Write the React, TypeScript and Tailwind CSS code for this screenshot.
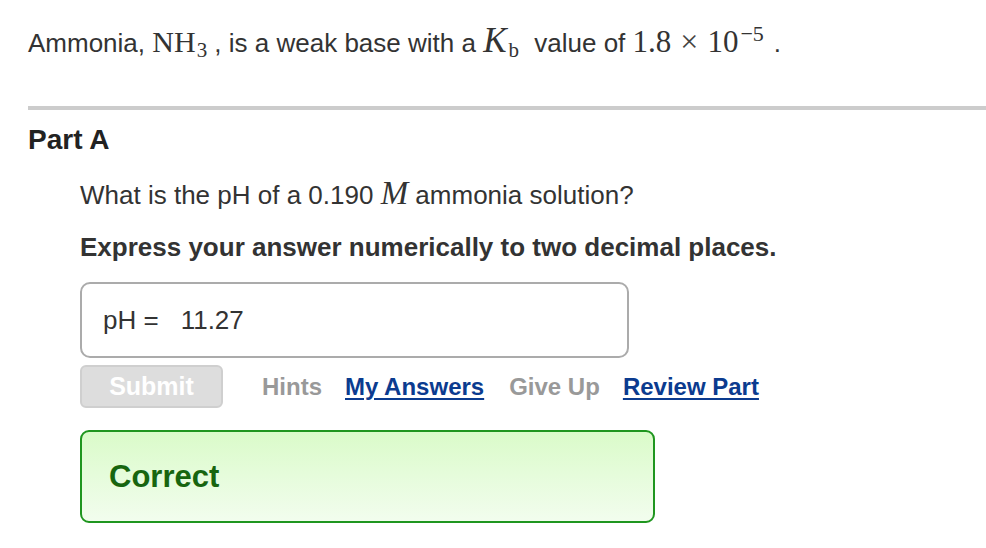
import React from "react";

const sans = { fontFamily: '"Liberation Sans", Arial, Helvetica, sans-serif' };

export default function App() {
  return (
    <div
      className="min-h-[548px] w-[986px] bg-white pl-[28px] pt-[28px] text-[#333]"
      style={sans}
    >
      <p className="text-[26px] leading-[30px] whitespace-nowrap">
        Ammonia,{" "}
        <span className='[font-family:"Liberation_Serif",serif] text-[30px] leading-[0]'>
          NH
          <sub className="text-[21px] ml-[1px]">3</sub>
        </span>{" "}
        , is a weak base with a{" "}
        <span className='[font-family:"Liberation_Serif",serif] text-[30px] leading-[0]'>
          <i className="text-[35px] mr-[1px]">K</i>
          <sub className="text-[21px] ml-[1px]">b</sub>
        </span>{" "}
        <span className="ml-[8px]">value of</span>{" "}
        <span className='[font-family:"Liberation_Serif",serif] text-[31px] leading-[0]'>
          1.8<span className="mx-[9px] text-[32px] font-light text-[#444]">×</span>10
          <sup className="text-[22px] ml-[2px]">−5</sup>
        </span>
        <span className="ml-[10px]">.</span>
      </p>

      <div className="mt-[48px] h-[4px] bg-[#cccccc]" />

      <h2 className="mt-[14px] text-[28px] font-bold leading-[32px] text-[#222]">
        Part A
      </h2>

      <div className="pl-[52px]">
        <p className="mt-[24px] text-[26px] leading-[30px] whitespace-nowrap">
          What is the pH of a 0.190{" "}
          <i className='[font-family:"Liberation_Serif",serif] text-[33px] leading-[0]'>
            M
          </i>{" "}
          ammonia solution?
        </p>

        <p className="mt-[22px] text-[26px] font-bold leading-[30px] whitespace-nowrap">
          Express your answer numerically to two decimal places.
        </p>

        <div className="mt-[20px] flex h-[76px] w-[549px] items-center rounded-[10px] border-2 border-[#ababab] pl-[21px] text-[26px] leading-[30px]">
          <span>pH =</span>
          <span className="ml-[22px]">11.27</span>
        </div>

        <div className="mt-[7px] flex items-center whitespace-nowrap">
          <div className="flex h-[43px] w-[143px] items-center justify-center rounded-[6px] border-2 border-[#cfcfcf] bg-[#dddddd] text-[25px] font-bold text-white">
            Submit
          </div>
          <span className="ml-[39px] text-[24px] font-bold text-[#999]">Hints</span>
          <span className="ml-[23px] text-[24px] font-bold text-[#0b3b8f] underline decoration-2 underline-offset-[3px]">
            My Answers
          </span>
          <span className="ml-[25px] text-[24px] font-bold text-[#999]">Give Up</span>
          <span className="ml-[23px] text-[24px] font-bold text-[#0b3b8f] underline decoration-2 underline-offset-[3px]">
            Review Part
          </span>
        </div>

        <div className="mt-[22px] flex h-[93px] w-[575px] items-center rounded-[9px] border-2 border-[#1f961f] bg-linear-to-b from-[#dafbc9] to-[#f2fdee] pl-[27px]">
          <span className="text-[31px] font-bold leading-[36px] text-[#17650f]">
            Correct
          </span>
        </div>
      </div>
    </div>
  );
}
